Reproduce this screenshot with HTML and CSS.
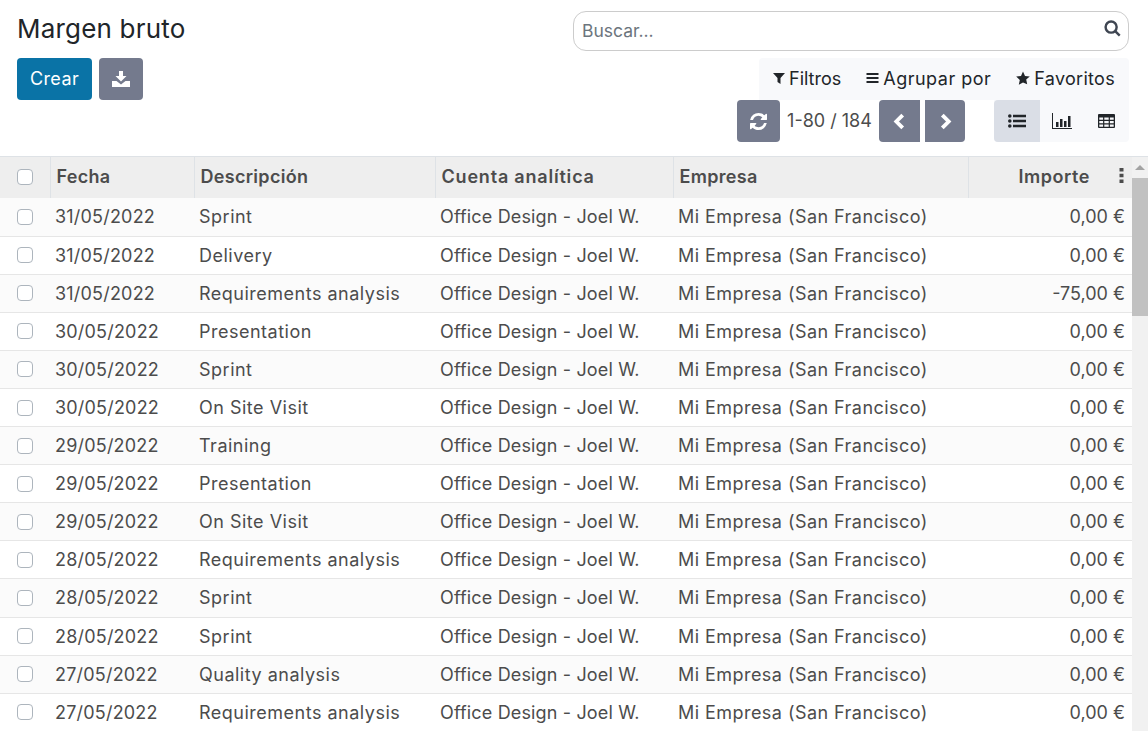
FILE: index.html
```html
<!DOCTYPE html>
<html lang="es">
<head>
    <meta charset="UTF-8">
    <meta name="viewport" content="width=device-width, initial-scale=1.0">
    <title>Margen bruto</title>
    <link rel="stylesheet" href="styles.css">
</head>
<body>
    <!-- Panel de control -->
    <header class="panel">
        <div class="panel-left">
            <h1>Margen bruto</h1>
            <div class="acciones">
                <button class="btn btn-primary" type="button"><span class="btn-texto">Crear</span></button>
                <button class="btn btn-secondary btn-export" type="button">
                    <svg class="icon-export" viewBox="0 0 18 16"><path d="M7 0h4v5h3.500L9 10.500 3.500 5H7z"/><path d="M0 10h4.500L9 13.500 13.500 10H18v6H0z"/></svg>
                </button>
            </div>
        </div>
        <div class="panel-right">
            <div class="buscador">
                <span class="buscador-texto">Buscar...</span>
                <svg class="icon-search" viewBox="0 0 16 16"><circle cx="6.700" cy="6.700" r="5.200"/><path d="M10.500 10.500l4.300 4.300"/></svg>
            </div>
            <div class="filtros">
                <span class="filtro"><svg class="icon-filter" viewBox="0 0 12 12"><path d="M0 1h12L7.500 6v6L4.500 10V6z"/></svg>Filtros</span>
                <span class="filtro"><svg class="icon-bars" viewBox="0 0 12 10"><path d="M0 0h12v2H0zM0 4h12v2H0zM0 8h12v2H0z"/></svg>Agrupar por</span>
                <span class="filtro"><svg class="icon-star" viewBox="0 0 14 14"><path d="M7 .5l2 4.400 4.800.5-3.600 3.200 1 4.700L7 11.400l-4.200 2.400 1-4.700L.2 5.400 5 4.900z"/></svg>Favoritos</span>
            </div>
            <div class="paginador">
                <button class="btn btn-secondary btn-refresh" type="button">
                    <svg class="icon-refresh" viewBox="0 0 1536 1536"><path d="M1511 928q0 5-1 7-64 268-268 434.500t-478 166.500q-146 0-282.500-55t-243.500-157l-129 129q-19 19-45 19t-45-19-19-45v-448q0-26 19-45t45-19h448q26 0 45 19t19 45-19 45l-137 137q71 66 161 102t187 36q134 0 250-65t186-179q11-17 53-117 8-23 30-23h192q13 0 22.500 9.500t9.500 22.500zm25-800v448q0 26-19 45t-45 19h-448q-26 0-45-19t-19-45 19-45l138-138q-148-137-349-137-134 0-250 65t-186 179q-11 17-53 117-8 23-30 23h-199q-13 0-22.500-9.500t-9.500-22.500v-7q65-268 270-434.500t480-166.500q146 0 284 55.500t245 156.500l130-129q19-19 45-19t45 19 19 45z"/></svg>
                </button>
                <span class="contador">1-80 / 184</span>
                <div class="flechas">
                    <button class="btn btn-secondary btn-prev" type="button"><svg class="icon-chevron" viewBox="0 0 12 16"><path d="M9 2L3 8l6 6"/></svg></button>
                    <button class="btn btn-secondary btn-next" type="button"><svg class="icon-chevron" viewBox="0 0 12 16"><path d="M3 2l6 6-6 6"/></svg></button>
                </div>
                <div class="vistas">
                    <span class="vista activa"><svg class="icon-list" viewBox="0 0 18 14"><circle cx="1.800" cy="2" r="1.800"/><circle cx="1.800" cy="7" r="1.800"/><circle cx="1.800" cy="12" r="1.800"/><path d="M5 .8h13v2.400H5zM5 5.800h13v2.400H5zM5 10.800h13v2.400H5z"/></svg></span>
                    <span class="vista"><svg class="icon-chart" viewBox="0 0 20 16"><path d="M0 0h1v15h19v1H0z"/><path d="M4 9h2.500v5H4zM8 6h2.500v8H8zM12 8h2.500v6H12zM16 3h2.500v11H16z"/></svg></span>
                    <span class="vista"><svg class="icon-table" viewBox="0 0 17 14"><path fill-rule="evenodd" d="M1 0h15a1 1 0 0 1 1 1v12a1 1 0 0 1-1 1H1a1 1 0 0 1-1-1V1a1 1 0 0 1 1-1zm.3 3.500v2.300h3.800V3.500zm5 0v2.300h4.400V3.500zm5.600 0v2.300h3.800V3.500zM1.300 7v2.300h3.800V7zm5 0v2.300h4.400V7zm5.600 0v2.300h3.800V7zM1.300 10.500v2.200h3.800v-2.200zm5 0v2.200h4.400v-2.200zm5.600 0v2.200h3.800v-2.200z"/></svg></span>
                </div>
            </div>
        </div>
    </header>

    <!-- Tabla de registros -->
    <main class="contenido">
        <div class="tabla-wrap">
            <table>
                <colgroup>
                    <col class="col-check">
                    <col class="col-fecha">
                    <col class="col-desc">
                    <col class="col-cuenta">
                    <col class="col-empresa">
                    <col class="col-importe">
                </colgroup>
                <thead>
                    <tr>
                        <th><span class="check"></span></th>
                        <th>Fecha</th>
                        <th>Descripción</th>
                        <th class="th-cuenta">Cuenta analítica</th>
                        <th>Empresa</th>
                        <th class="th-importe">
                            <span class="importe-titulo">Importe</span>
                            <svg class="icon-kebab" viewBox="0 0 5 15"><path d="M.5 0h4v3.600h-4zM.5 5.700h4v3.600h-4zM.5 11.400h4V15h-4z"/></svg>
                        </th>
                    </tr>
                </thead>
                <tbody id="filas">
                    <tr><td><span class="check"></span></td><td>31/05/2022</td><td>Sprint</td><td>Office Design - Joel W.</td><td>Mi Empresa (San Francisco)</td><td class="num">0,00 €</td></tr>
                    <tr><td><span class="check"></span></td><td>31/05/2022</td><td>Delivery</td><td>Office Design - Joel W.</td><td>Mi Empresa (San Francisco)</td><td class="num">0,00 €</td></tr>
                    <tr><td><span class="check"></span></td><td>31/05/2022</td><td>Requirements analysis</td><td>Office Design - Joel W.</td><td>Mi Empresa (San Francisco)</td><td class="num">-75,00 €</td></tr>
                    <tr><td><span class="check"></span></td><td>30/05/2022</td><td>Presentation</td><td>Office Design - Joel W.</td><td>Mi Empresa (San Francisco)</td><td class="num">0,00 €</td></tr>
                    <tr><td><span class="check"></span></td><td>30/05/2022</td><td>Sprint</td><td>Office Design - Joel W.</td><td>Mi Empresa (San Francisco)</td><td class="num">0,00 €</td></tr>
                    <tr><td><span class="check"></span></td><td>30/05/2022</td><td>On Site Visit</td><td>Office Design - Joel W.</td><td>Mi Empresa (San Francisco)</td><td class="num">0,00 €</td></tr>
                    <tr><td><span class="check"></span></td><td>29/05/2022</td><td>Training</td><td>Office Design - Joel W.</td><td>Mi Empresa (San Francisco)</td><td class="num">0,00 €</td></tr>
                    <tr><td><span class="check"></span></td><td>29/05/2022</td><td>Presentation</td><td>Office Design - Joel W.</td><td>Mi Empresa (San Francisco)</td><td class="num">0,00 €</td></tr>
                    <tr><td><span class="check"></span></td><td>29/05/2022</td><td>On Site Visit</td><td>Office Design - Joel W.</td><td>Mi Empresa (San Francisco)</td><td class="num">0,00 €</td></tr>
                    <tr><td><span class="check"></span></td><td>28/05/2022</td><td>Requirements analysis</td><td>Office Design - Joel W.</td><td>Mi Empresa (San Francisco)</td><td class="num">0,00 €</td></tr>
                    <tr><td><span class="check"></span></td><td>28/05/2022</td><td>Sprint</td><td>Office Design - Joel W.</td><td>Mi Empresa (San Francisco)</td><td class="num">0,00 €</td></tr>
                    <tr><td><span class="check"></span></td><td>28/05/2022</td><td>Sprint</td><td>Office Design - Joel W.</td><td>Mi Empresa (San Francisco)</td><td class="num">0,00 €</td></tr>
                    <tr><td><span class="check"></span></td><td>27/05/2022</td><td>Quality analysis</td><td>Office Design - Joel W.</td><td>Mi Empresa (San Francisco)</td><td class="num">0,00 €</td></tr>
                    <tr><td><span class="check"></span></td><td>27/05/2022</td><td>Requirements analysis</td><td>Office Design - Joel W.</td><td>Mi Empresa (San Francisco)</td><td class="num">0,00 €</td></tr>
                </tbody>
            </table>
        </div>
        <!-- Barra de scroll dibujada -->
        <div class="scrollbar">
            <span class="scroll-flecha"></span>
            <span class="scroll-thumb"></span>
        </div>
    </main>
</body>
</html>
```

FILE: styles.css
```css
html, body {
    margin: 0;
    padding: 0;
    height: 100%;
}
body {
    display: flex;
    flex-direction: column;
    height: 731px;
    overflow: hidden;
    background-color: #fff;
    color: #4c4c4c;
    font-family: Inter, "Open Sans", sans-serif;
    font-size: 18px;
}

/* Panel de control */
.panel {
    display: flex;
    justify-content: space-between;
    box-sizing: border-box;
    height: 156px;
    padding: 11px 19px 0 17px;
    flex-shrink: 0;
}
.panel-left {
    display: flex;
    flex-direction: column;
}
h1 {
    margin: 0;
    height: 47px;
    font-size: 26px;
    font-weight: 400;
    line-height: 36px;
    letter-spacing: .2px;
    color: #212529;
}
.acciones {
    display: flex;
    gap: 7px;
}
.btn {
    display: flex;
    align-items: center;
    justify-content: center;
    height: 42px;
    padding: 0;
    border: none;
    border-radius: 4px;
    color: #fff;
    font: inherit;
}
.btn-texto {
    padding-bottom: 2px;
    letter-spacing: .4px;
}
.btn-primary {
    width: 75px;
    background-color: #0a73a6;
}
.btn-secondary {
    background-color: #747a8d;
}
.btn-export {
    width: 44px;
}
.icon-export {
    width: 18px;
    height: 16px;
    fill: #fff;
}

.panel-right {
    display: flex;
    flex-direction: column;
    align-items: flex-end;
}
.buscador {
    display: flex;
    align-items: center;
    justify-content: space-between;
    box-sizing: border-box;
    width: 556px;
    height: 40px;
    margin-bottom: 7px;
    padding: 0 7px 0 8px;
    border: 1px solid #ccc;
    border-radius: 13px;
}
.buscador-texto {
    padding-bottom: 2px;
    color: #6c757d;
    font-size: 17.500px;
}
.icon-search {
    width: 17px;
    height: 17px;
    margin-top: -5px;
    fill: none;
    stroke: #3f4652;
    stroke-width: 2.300;
}

.filtros {
    display: flex;
    align-items: center;
    justify-content: space-between;
    box-sizing: border-box;
    width: 370px;
    height: 42px;
    padding: 0 14px;
    background-color: #f8f9fb;
    border-radius: 4px 4px 0 0;
    color: #212529;
}
.filtro {
    display: flex;
    align-items: center;
    gap: 4px;
    padding-bottom: 2px;
}
.filtro:nth-child(2) {
    letter-spacing: .5px;
}
.filtro:nth-child(3) {
    letter-spacing: .3px;
}
.filtro svg {
    fill: #212529;
}
.icon-filter {
    width: 12px;
    height: 12px;
}
.icon-bars {
    width: 13px;
    height: 10px;
}
.icon-star {
    width: 14px;
    height: 14px;
}

.paginador {
    display: flex;
    align-items: center;
    height: 42px;
}
.btn-refresh {
    width: 43px;
}
.icon-refresh {
    width: 17px;
    height: 17px;
    fill: #fff;
}
.contador {
    width: 99px;
    padding-bottom: 2px;
    text-align: center;
}
.flechas {
    display: flex;
    gap: 5px;
    margin-right: 29px;
}
.btn-prev {
    width: 41px;
    border-radius: 4px 0 0 4px;
}
.btn-next {
    width: 40px;
    border-radius: 0 4px 4px 0;
}
.icon-chevron {
    width: 13px;
    height: 17px;
    fill: none;
    stroke: #fff;
    stroke-width: 3.600;
}
.vistas {
    display: flex;
    height: 42px;
    background-color: #f8f9fb;
    border-radius: 0 0 4px 4px;
}
.vista {
    display: flex;
    align-items: center;
    justify-content: center;
    width: 44.500px;
}
.vista.activa {
    width: 46px;
    background-color: #dadee6;
    border-radius: 4px 0 0 4px;
}
.vista svg {
    fill: #212529;
}
.icon-list {
    width: 18px;
    height: 14px;
}
.icon-chart {
    width: 20px;
    height: 16px;
}
.icon-table {
    width: 17px;
    height: 14px;
}

/* Tabla */
.contenido {
    display: flex;
    flex: 1;
    min-height: 0;
    border-top: 1px solid #dee2e6;
}
.tabla-wrap {
    flex: 1;
    overflow: hidden;
}
table {
    width: 1132px;
    table-layout: fixed;
    border-collapse: collapse;
}
.col-check { width: 50px; }
.col-fecha { width: 144px; }
.col-desc { width: 241px; }
.col-cuenta { width: 238px; }
.col-empresa { width: 295px; }
.col-importe { width: 164px; }

thead tr {
    height: 41px;
    background-color: #eee;
}
th {
    padding: 0 5px 3px 6px;
    text-align: left;
    font-weight: 600;
    letter-spacing: .3px;
    border-left: 1px solid #dee2e6;
    white-space: nowrap;
}
th:first-child {
    border-left: none;
    padding: 0 0 2px 17px;
}
.th-cuenta {
    letter-spacing: .8px;
}
.th-importe {
    text-align: right;
    padding-right: 8px;
    letter-spacing: .55px;
}
.importe-titulo {
    margin-right: 24px;
}
.icon-kebab {
    width: 5px;
    height: 15px;
    fill: #4c4c4c;
}

tbody tr {
    height: 38.100px;
    border-bottom: 1px solid #e6e6e6;
}
tbody tr:nth-child(odd) {
    background-color: #fbfbfb;
}
td {
    box-sizing: border-box;
    padding: 0 5px;
    white-space: nowrap;
    overflow: hidden;
}
td:first-child {
    padding: 0 0 0 17px;
}
/* el ancho de las letras cambia por columna */
td:nth-child(2) { letter-spacing: .2px; }
td:nth-child(3) { letter-spacing: .5px; }
td:nth-child(4) { letter-spacing: .15px; }
td:nth-child(5) { letter-spacing: .45px; }
.num {
    text-align: right;
    padding-right: 7px;
}
.check {
    display: block;
    box-sizing: border-box;
    width: 16px;
    height: 16px;
    background-color: #fff;
    border: 1px solid #adb5bd;
    border-radius: 4px;
}

/* Scroll */
.scrollbar {
    display: flex;
    flex-direction: column;
    flex-shrink: 0;
    width: 16px;
    background-color: #f1f1f1;
}
.scroll-flecha {
    width: 0;
    height: 0;
    margin: 8px auto 8px;
    border-left: 5px solid transparent;
    border-right: 5px solid transparent;
    border-bottom: 5px solid #a3a3a3;
}
.scroll-thumb {
    height: 138px;
    background-color: #c1c1c1;
}
```
